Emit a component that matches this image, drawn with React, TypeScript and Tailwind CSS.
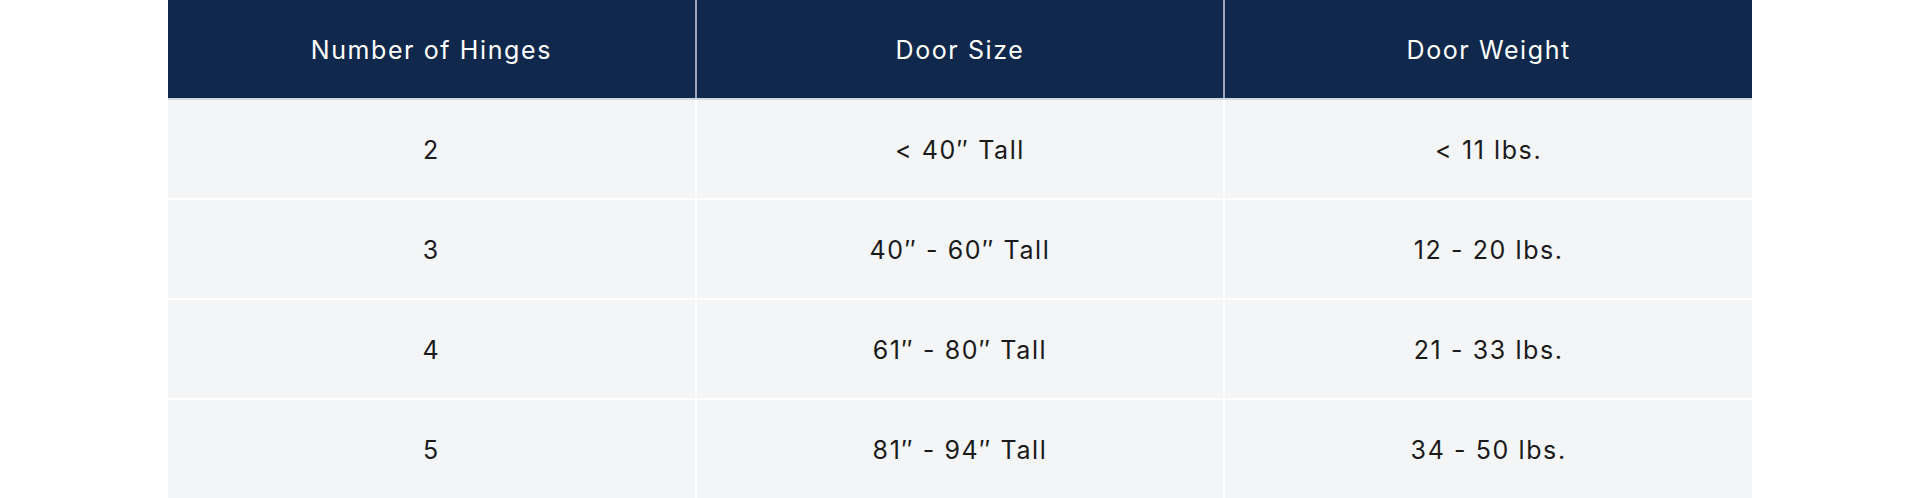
import React from "react";

const rows = [
  ["2", "< 40\u2033 Tall", "< 11 lbs."],
  ["3", "40\u2033 - 60\u2033 Tall", "12 - 20 lbs."],
  ["4", "61\u2033 - 80\u2033 Tall", "21 - 33 lbs."],
  ["5", "81\u2033 - 94\u2033 Tall", "34 - 50 lbs."],
];

export default function App() {
  return (
    <div className="w-[1920px] h-[498px] bg-white overflow-hidden" style={{ fontFamily: "Inter, 'Noto Sans', sans-serif" }}>
      <div className="w-[1584px] ml-[168px] flex flex-col">
        <div className="grid grid-cols-3 gap-x-[2px] bg-[#9ea6b8]">
          {["Number of Hinges", "Door Size", "Door Weight"].map((h) => (
            <div key={h} className="h-[98px] pt-[4px] bg-[#10284b] flex items-center justify-center text-white text-[25px] tracking-[1.6px]">
              {h}
            </div>
          ))}
        </div>
        <div className="h-[2px] bg-[#d3d7df]" />
        <div className="grid grid-cols-3 gap-x-[2px] gap-y-[2px] bg-white">
          {rows.flat().map((c, i) => (
            <div key={i} className="h-[98px] pt-[3px] bg-[#f4f5f7] flex items-center justify-center text-[#1a1a1a] text-[25px] tracking-[1.6px]">
              {c}
            </div>
          ))}
        </div>
      </div>
    </div>
  );
}
